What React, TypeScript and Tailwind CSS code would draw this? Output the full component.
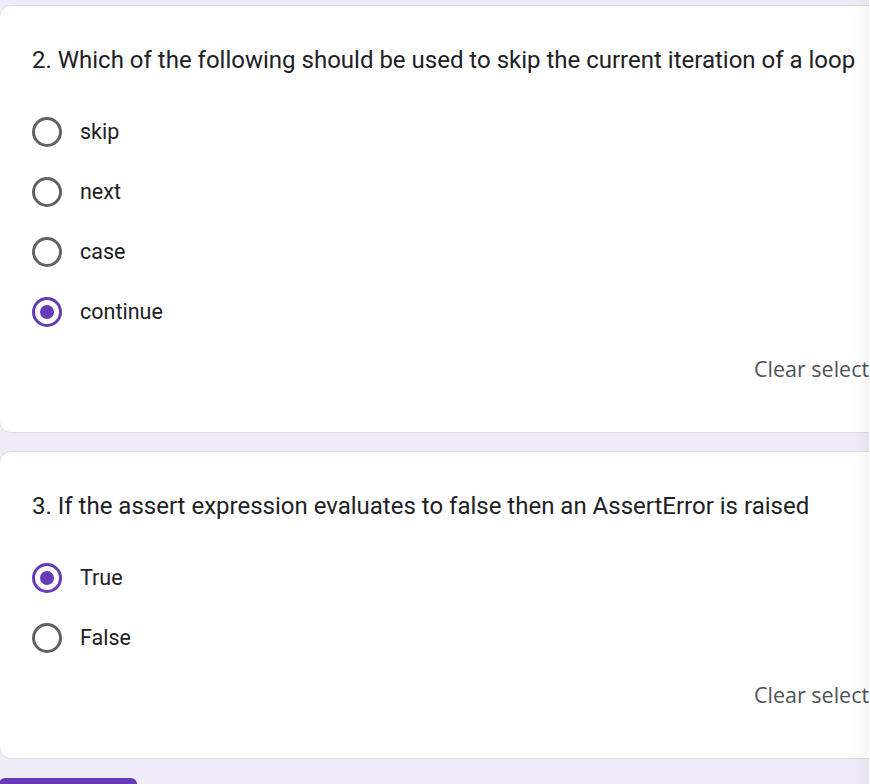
import { useState } from 'react';

type Question = {
  title: string;
  options: string[];
  initial: string;
};

const questions: Question[] = [
  {
    title: '2. Which of the following should be used to skip the current iteration of a loop',
    options: ['skip', 'next', 'case', 'continue'],
    initial: 'continue',
  },
  {
    title: '3. If the assert expression evaluates to false then an AssertError is raised',
    options: ['True', 'False'],
    initial: 'True',
  },
];

function Radio({ checked }: { checked: boolean }) {
  return (
    <span
      className={`w-[30px] h-[30px] rounded-full border-[3px] flex items-center justify-center shrink-0 ${
        checked ? 'border-[#673ab7]' : 'border-[#5f6368]'
      }`}
    >
      {checked && <span className="w-[14px] h-[14px] rounded-full bg-[#673ab7]" />}
    </span>
  );
}

function QuestionCard({ q }: { q: Question }) {
  const [value, setValue] = useState<string | null>(q.initial);

  return (
    <div className="w-[1000px] bg-white border border-[#dadce0] rounded-[12px] pl-[32px] pt-[38px] pb-[49px]">
      <div className="text-[24px] leading-[32px] text-[#202124] whitespace-nowrap">{q.title}</div>
      <div className="mt-[26px] flex flex-col">
        {q.options.map((opt) => (
          <label
            key={opt}
            onClick={() => setValue(opt)}
            className="h-[60px] flex items-center gap-[18px] cursor-pointer"
          >
            <Radio checked={value === opt} />
            <span className="text-[21.5px] text-[#202124]">{opt}</span>
          </label>
        ))}
      </div>
      <div className="pl-[722px] mt-[13px] h-[28px] flex items-center">
        <button
          onClick={() => setValue(null)}
          className="text-[21.5px] leading-[28px] font-medium text-[#4f5358] whitespace-nowrap"
          style={{ fontFamily: '"Open Sans", Roboto, sans-serif' }}
        >
          Clear selection
        </button>
      </div>
    </div>
  );
}

export default function App() {
  return (
    <div
      className="relative w-[870px] h-[784px] overflow-hidden bg-[#f0ebf8] pt-[5px] -ml-[1px]"
      style={{ fontFamily: 'Roboto, "Noto Sans", sans-serif' }}
    >
      <div className="flex flex-col gap-[18px]">
        {questions.map((q) => (
          <QuestionCard key={q.title} q={q} />
        ))}
      </div>
      <div className="mt-[19px] w-[138px] h-[40px] bg-[#673ab7] rounded-[6px]" />
      <div className="absolute top-0 right-0 w-[16px] h-full bg-gradient-to-r from-transparent to-black/[0.04] pointer-events-none" />
    </div>
  );
}
